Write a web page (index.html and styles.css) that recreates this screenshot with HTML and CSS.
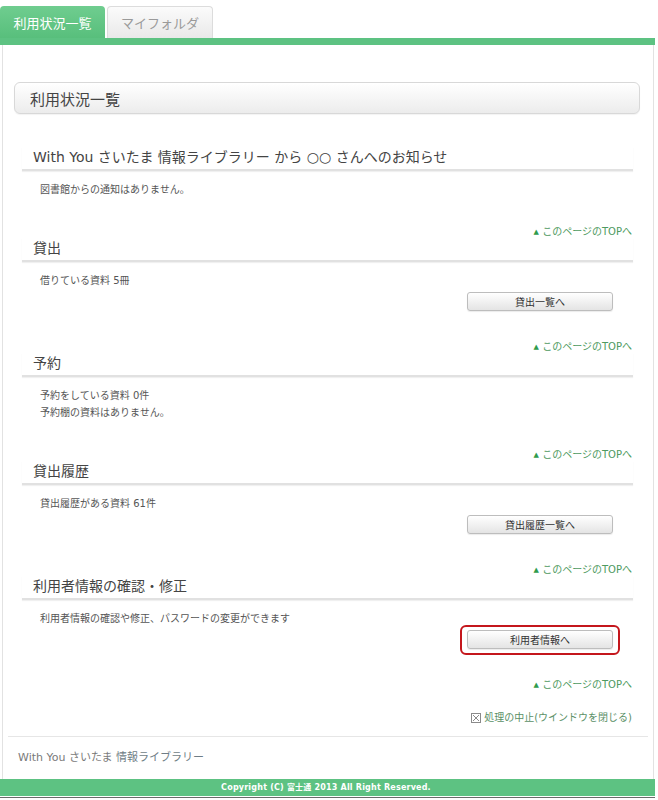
FILE: index.html
```html
<!DOCTYPE html>
<html lang="ja">
<head>
<meta charset="utf-8">
<title>利用状況一覧</title>
<link rel="stylesheet" href="styles.css">
</head>
<body>
<div class="page" id="top">
  <div class="tabs">
    <a class="tab tab-active" href="#top">利用状況一覧</a>
    <a class="tab tab-idle" href="#top">マイフォルダ</a>
  </div>
  <div class="tabbar"></div>
  <div class="main">
    <div class="head-box">利用状況一覧</div>

    <div class="section">
      <h2 class="sec-title">With You さいたま 情報ライブラリー から ○○ さんへのお知らせ</h2>
      <div class="sec-body"><p>図書館からの通知はありません。</p></div>
      <div class="totop"><a href="#top"><span class="tri">▲</span> このページのTOPへ</a></div>
    </div>

    <div class="section">
      <h2 class="sec-title">貸出</h2>
      <div class="sec-body"><p>借りている資料 5冊</p></div>
      <div class="btn-row"><button class="btn">貸出一覧へ</button></div>
      <div class="totop"><a href="#top"><span class="tri">▲</span> このページのTOPへ</a></div>
    </div>

    <div class="section">
      <h2 class="sec-title">予約</h2>
      <div class="sec-body"><p>予約をしている資料 0件</p><p>予約棚の資料はありません。</p></div>
      <div class="totop"><a href="#top"><span class="tri">▲</span> このページのTOPへ</a></div>
    </div>

    <div class="section">
      <h2 class="sec-title">貸出履歴</h2>
      <div class="sec-body"><p>貸出履歴がある資料 61件</p></div>
      <div class="btn-row"><button class="btn">貸出履歴一覧へ</button></div>
      <div class="totop"><a href="#top"><span class="tri">▲</span> このページのTOPへ</a></div>
    </div>

    <div class="section">
      <h2 class="sec-title">利用者情報の確認・修正</h2>
      <div class="sec-body"><p>利用者情報の確認や修正、パスワードの変更ができます</p></div>
      <div class="btn-row"><button class="btn btn-marked">利用者情報へ</button></div>
      <div class="totop"><a href="#top"><span class="tri">▲</span> このページのTOPへ</a></div>
    </div>

    <div class="close-row">
      <a href="#top" class="close-link"><svg class="close-ico" width="10" height="10" viewBox="0 0 10 10"><rect x="0.5" y="0.5" width="9" height="9" fill="none" stroke="#8a8a8a"/><path d="M2 2 L8 8 M8 2 L2 8" stroke="#8a8a8a" stroke-width="1"/></svg>処理の中止(ウインドウを閉じる)</a>
    </div>

    <div class="sep"></div>
    <div class="site-name">With You さいたま <span class="site-lib">情報ライブラリー</span></div>
  </div>
  <div class="footer">Copyright (C) 富士通 2013 All Right Reserved.</div>
  <div class="footer-edge"></div>
</div>
</body>
</html>
```

FILE: styles.css
```css
* { box-sizing: border-box; }
html, body { margin: 0; padding: 0; background: #fff; }
body {
  font-family: "DejaVu Sans", "Noto Sans CJK JP", sans-serif;
  color: #444;
}
.page { width: 658px; }

.tabs {
  display: flex;
  align-items: flex-end;
  height: 38px;
  gap: 2px;
}
.tab {
  display: flex;
  align-items: center;
  justify-content: center;
  height: 32px;
  font-size: 13px;
  text-decoration: none;
  border-radius: 4px 4px 0 0;
}
.tab-active {
  width: 105px;
  color: #fff;
  background: linear-gradient(#6fcd8f, #58bf7c);
}
.tab-idle {
  width: 106px;
  color: #9a9a9a;
  background: linear-gradient(#fbfbfb, #e9e9e9);
  border: 1px solid #dcdcdc;
  border-bottom: none;
}
.tabbar {
  width: 655px;
  height: 7px;
  background: #5dc282;
}

.main {
  margin-left: 2px;
  width: 652px;
  border-left: 1px solid #e2e2e2;
  border-right: 1px solid #e2e2e2;
  padding-top: 37px;
  padding-bottom: 13px;
}
.head-box {
  margin: 0 13px 0 11px;
  height: 32px;
  display: flex;
  align-items: center;
  padding-left: 15px;
  font-size: 15px;
  color: #444;
  border: 1px solid #d8d8d8;
  border-radius: 6px;
  background: linear-gradient(#ffffff, #ececec);
  box-shadow: 0 1px 1px rgba(0,0,0,0.05);
}

.section {
  margin: 0 20px 0 19px;
}
.head-box + .section { margin-top: 33px; }
.section + .section { margin-top: -1px; }

.sec-title {
  margin: 0;
  font-weight: normal;
  font-size: 14px;
  line-height: 20px;
  padding: 0 0 2px 11px;
  color: #444;
  border-bottom: 2px solid #e1e1e1;
  box-shadow: 0 1px 1px rgba(0,0,0,0.06);
}
.sec-body {
  margin-top: 10px;
  padding-left: 18px;
  font-size: 10px;
  line-height: 17px;
  color: #555;
}
.sec-body p { margin: 0; }

.btn-row {
  display: flex;
  justify-content: flex-end;
  padding-right: 20px;
  margin-top: 3px;
}
.btn {
  position: relative;
  width: 146px;
  height: 19px;
  padding: 0;
  font-family: "DejaVu Sans", "Noto Sans CJK JP", sans-serif;
  font-size: 10px;
  color: #333;
  border: 1px solid #bdbdbd;
  border-radius: 3px;
  background: linear-gradient(#ffffff, #e4e4e4);
  box-shadow: 0 1px 1px rgba(0,0,0,0.08);
}
.btn-marked::after {
  content: "";
  position: absolute;
  left: -8px;
  right: -8px;
  top: -6px;
  bottom: -7px;
  border: 2px solid #c4161c;
  border-radius: 6px;
}

.totop {
  text-align: right;
  padding-right: 1px;
  font-size: 10px;
  line-height: 14px;
}
.sec-body + .totop { margin-top: 27px; }
.btn-row + .totop { margin-top: 29px; }
.totop a, .close-link {
  color: #4e9a60;
  text-decoration: none;
}
.tri {
  font-size: 7px;
  color: #2f9b4c;
  vertical-align: 1px;
}

.close-row {
  margin: 19px 21px 0 0;
  display: flex;
  justify-content: flex-end;
  font-size: 10px;
  line-height: 14px;
}
.close-link {
  display: inline-flex;
  align-items: center;
  gap: 3px;
  color: #5a8f66;
}
.close-ico { display: block; }

.sep {
  margin: 11px 5px 0 5px;
  border-top: 1px solid #e6e6e6;
}
.site-name {
  margin-top: 13px;
  padding-left: 15px;
  font-size: 11px;
  line-height: 16px;
  color: #7a7a7a;
}
.site-lib { color: #6f7d86; }

.footer {
  width: 655px;
  height: 17px;
  background: #5dc282;
  color: #fff;
  font-size: 8px;
  font-weight: bold;
  line-height: 17px;
  text-align: center;
  padding-right: 3px;
  letter-spacing: 0.2px;
}
.footer-edge {
  width: 655px;
  height: 1px;
  margin-top: 1px;
  background: #6a6a6a;
}
```
